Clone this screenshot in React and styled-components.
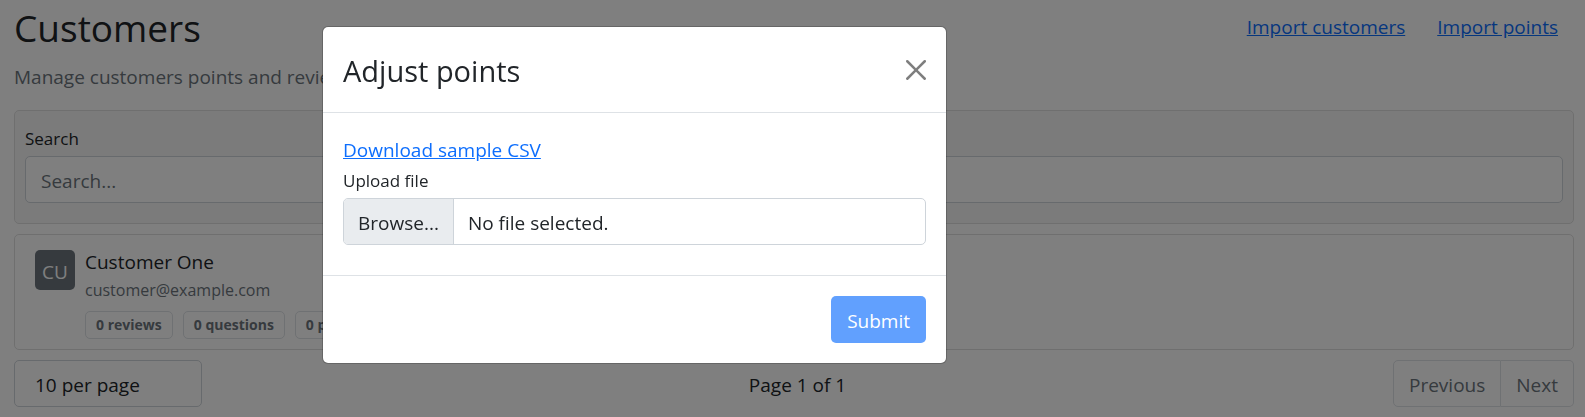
import React from "react";
import styled, { createGlobalStyle } from "styled-components";

const GlobalStyle = createGlobalStyle`
  *, *::before, *::after { box-sizing: border-box; }
  body {
    margin: 0;
    background: #fff;
    color: #212529;
    font-family: "Segoe UI", "Open Sans", "Noto Sans", sans-serif;
    font-size: 19px;
    line-height: 30px;
  }
  button, input, select { font: inherit; color: inherit; }
`;

const Page = styled.main`
  padding: 4px 11px 10px 14px;
`;

const PageHeader = styled.header`
  display: flex;
  justify-content: space-between;
  align-items: flex-start;
  margin-bottom: 18px;
`;

const PageTitle = styled.h1`
  margin: 0 0 10px;
  font-size: 37px;
  font-weight: 400;
  line-height: 48px;
`;

const Subtitle = styled.p`
  margin: 0;
  color: #6c757d;
`;

const Actions = styled.nav`
  display: flex;
  gap: 32px;
  padding: 8px 16px;
`;

const TextLink = styled.a`
  color: #0d6efd;
  text-decoration: underline;
`;

const Panel = styled.section`
  margin-bottom: 10px;
  padding: ${(p) => (p.$muted ? "15px 10px 20px" : "15px 20px 10px")};
  border: 1px solid #dfdfdf;
  border-radius: 5px;
  background: ${(p) => (p.$muted ? "#f7f7f7" : "#fff")};
`;

const FieldLabel = styled.label`
  display: block;
  margin-bottom: 4px;
  font-size: 17px;
  line-height: 26px;
`;

const SearchInput = styled.input`
  display: block;
  width: 100%;
  height: 47px;
  padding: 2px 15px 0;
  border: 1px solid #ced4da;
  border-radius: 5px;
  background: #fff;
  &::placeholder { color: #6c757d; opacity: 1; }
`;

const Customer = styled.article`
  display: flex;
  gap: 10px;
`;

const Avatar = styled.div`
  display: flex;
  align-items: center;
  justify-content: center;
  flex: none;
  width: 40px;
  height: 40px;
  padding-top: 4px;
  border-radius: 5px;
  background: #6c757d;
  color: #fff;
`;

const CustomerName = styled.div`
  line-height: 24px;
`;

const CustomerEmail = styled.div`
  margin-top: 2px;
  color: #6c757d;
  font-size: 16px;
  line-height: 28px;
`;

const Badges = styled.div`
  display: flex;
  gap: 10px;
  margin-top: 7px;
`;

const Badge = styled.span`
  padding: 0 10px;
  border: 1px solid #dee2e6;
  border-radius: 5px;
  color: #6c757d;
  font-size: 14px;
  font-weight: 700;
  line-height: 26px;
`;

const Pager = styled.footer`
  display: flex;
  justify-content: space-between;
  align-items: center;
`;

const PageSize = styled.select`
  width: 188px;
  height: 47px;
  padding: 2px 20px 0;
  appearance: none;
  border: 1px solid #ced4da;
  border-radius: 5px;
  background: #fff;
`;

const PageStatus = styled.span`
  padding-top: 2px;
`;

const PagerGroup = styled.div`
  display: flex;
`;

const PagerButton = styled.button`
  height: 47px;
  padding: 2px 15px 0;
  border: 1px solid #dee2e6;
  background: #fff;
  color: #6c757d;
  &:first-child { border-radius: 5px 0 0 5px; }
  &:last-child { border-left: 0; border-radius: 0 5px 5px 0; }
`;

const Backdrop = styled.div`
  position: fixed;
  inset: 0;
  padding: 26px 20px 0 322px;
  background: rgba(0, 0, 0, 0.5);
`;

const Dialog = styled.div`
  max-width: 625px;
  border: 1px solid rgba(0, 0, 0, 0.2);
  border-radius: 6px;
  background: #fff;
  background-clip: padding-box;
`;

const DialogHeader = styled.header`
  display: flex;
  justify-content: space-between;
  align-items: center;
  padding: 20px;
  border-bottom: 1px solid #dee2e6;
`;

const DialogTitle = styled.h2`
  margin: 0;
  padding-top: 2px;
  font-size: 29px;
  font-weight: 400;
  line-height: 43px;
`;

const CloseButton = styled.button`
  display: flex;
  padding: 0;
  border: 0;
  background: none;
  opacity: 0.5;
`;

const DialogBody = styled.div`
  padding: 22px 20px 30px;
`;

const DownloadRow = styled.div`
  margin-bottom: 3px;
`;

const FileField = styled.div`
  position: relative;
  display: flex;
  height: 47px;
  overflow: hidden;
  border: 1px solid #ced4da;
  border-radius: 5px;
  line-height: 45px;
`;

const FileButton = styled.span`
  padding: 2px 14px 0;
  border-right: 1px solid #ced4da;
  background: #e9ecef;
`;

const FileName = styled.span`
  padding: 2px 14px 0;
`;

const FileInput = styled.input`
  position: absolute;
  inset: 0;
  width: 100%;
  opacity: 0;
`;

const DialogFooter = styled.footer`
  display: flex;
  justify-content: flex-end;
  padding: 20px;
  border-top: 1px solid #dee2e6;
`;

const SubmitButton = styled.button`
  height: 47px;
  padding: 2px 16px 0;
  border: 0;
  border-radius: 5px;
  background: #0d6efd;
  color: #fff;
  opacity: 0.65;
`;

export default function App() {
  return (
    <>
      <GlobalStyle />
      <Page>
        <PageHeader>
          <div>
            <PageTitle>Customers</PageTitle>
            <Subtitle>Manage customers points and reviews</Subtitle>
          </div>
          <Actions>
            <TextLink href="#import-customers">Import customers</TextLink>
            <TextLink href="#import-points">Import points</TextLink>
          </Actions>
        </PageHeader>

        <Panel $muted>
          <FieldLabel htmlFor="search">Search</FieldLabel>
          <SearchInput id="search" type="text" placeholder="Search..." />
        </Panel>

        <Panel>
          <Customer>
            <Avatar>CU</Avatar>
            <div>
              <CustomerName>Customer One</CustomerName>
              <CustomerEmail>customer@example.com</CustomerEmail>
              <Badges>
                <Badge>0 reviews</Badge>
                <Badge>0 questions</Badge>
                <Badge>0 points</Badge>
              </Badges>
            </div>
          </Customer>
        </Panel>

        <Pager>
          <PageSize aria-label="Customers per page">
            <option>10 per page</option>
          </PageSize>
          <PageStatus>Page 1 of 1</PageStatus>
          <PagerGroup>
            <PagerButton type="button" disabled>Previous</PagerButton>
            <PagerButton type="button" disabled>Next</PagerButton>
          </PagerGroup>
        </Pager>
      </Page>

      <Backdrop>
        <Dialog role="dialog" aria-modal="true" aria-labelledby="dialog-title">
          <DialogHeader>
            <DialogTitle id="dialog-title">Adjust points</DialogTitle>
            <CloseButton type="button" aria-label="Close">
              <svg width="20" height="20" viewBox="0 0 16 16" fill="#000">
                <path d="M.293.293a1 1 0 011.414 0L8 6.586 14.293.293a1 1 0 111.414 1.414L9.414 8l6.293 6.293a1 1 0 01-1.414 1.414L8 9.414l-6.293 6.293a1 1 0 01-1.414-1.414L6.586 8 .293 1.707a1 1 0 010-1.414z" />
              </svg>
            </CloseButton>
          </DialogHeader>
          <DialogBody>
            <DownloadRow>
              <TextLink href="#sample-csv">Download sample CSV</TextLink>
            </DownloadRow>
            <FieldLabel htmlFor="points-file">Upload file</FieldLabel>
            <FileField>
              <FileButton aria-hidden="true">Browse...</FileButton>
              <FileName aria-hidden="true">No file selected.</FileName>
              <FileInput id="points-file" type="file" accept=".csv" />
            </FileField>
          </DialogBody>
          <DialogFooter>
            <SubmitButton type="submit" disabled>Submit</SubmitButton>
          </DialogFooter>
        </Dialog>
      </Backdrop>
    </>
  );
}
